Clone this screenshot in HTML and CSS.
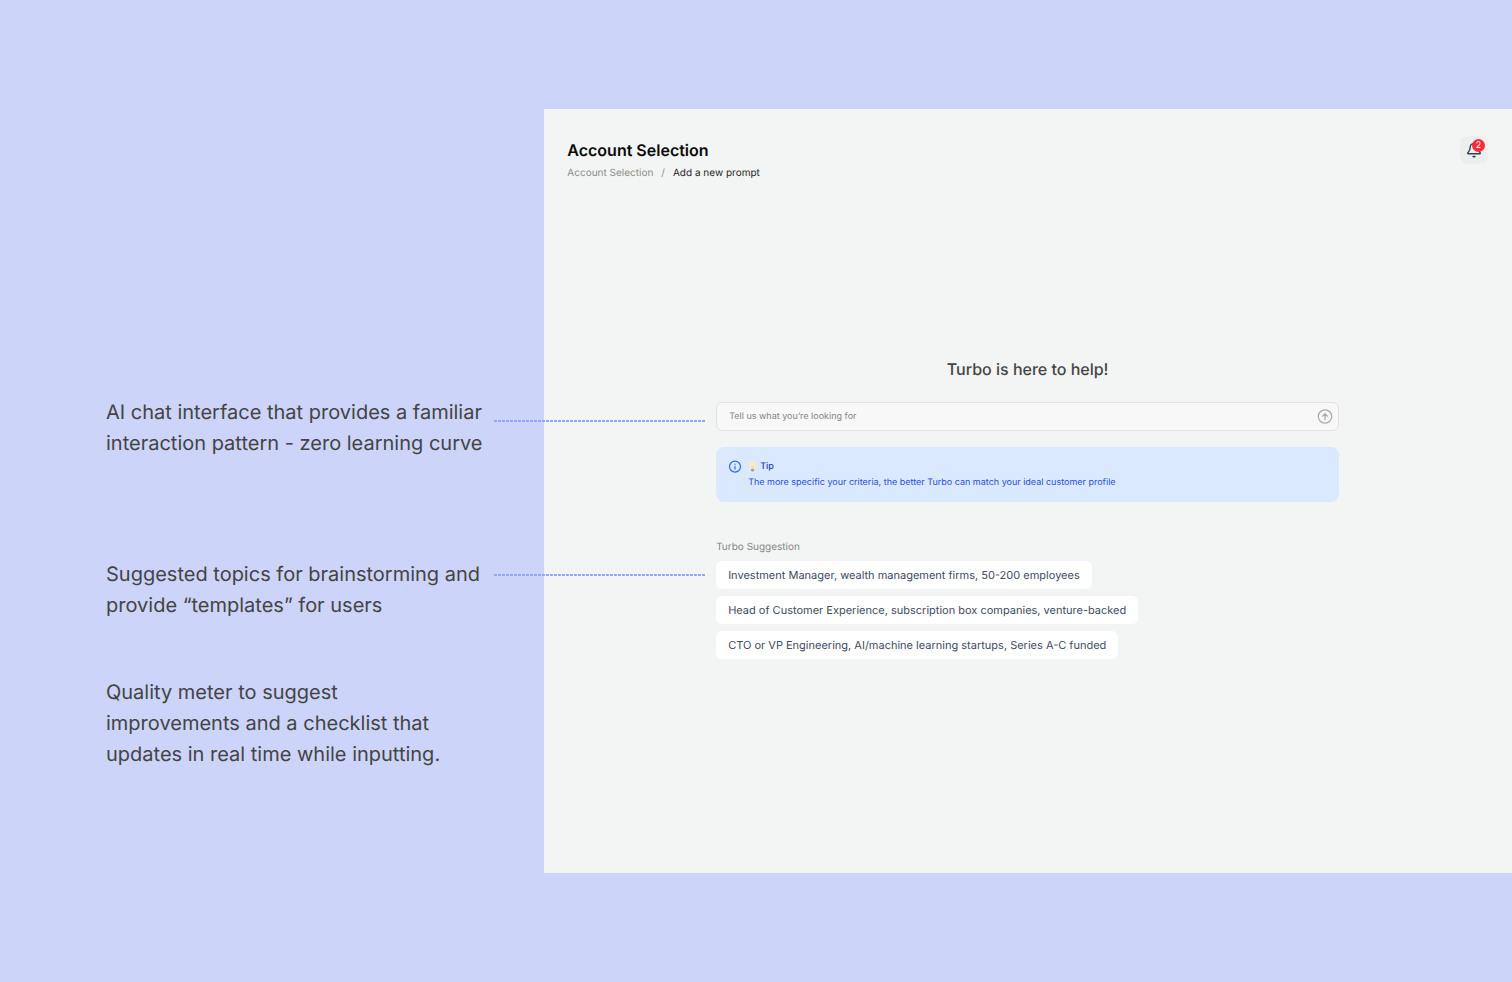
FILE: index.html
```html
<!DOCTYPE html>
<html lang="en">
<head>
    <meta charset="UTF-8">
    <meta name="viewport" content="width=device-width, initial-scale=1.0">
    <title>Account Selection</title>
    <link rel="stylesheet" href="styles.css">
</head>
<body>

<!-- Notes -->
<aside class="notes">
    <p class="note note-chat">AI chat interface that provides a familiar interaction pattern - zero learning curve</p>
    <p class="note note-topics">Suggested topics for brainstorming and provide “templates” for users</p>
    <p class="note note-quality">Quality meter to suggest improvements and a checklist that updates in real time while inputting.</p>
</aside>

<!-- App -->
<main class="panel">
    <header class="panel-header">
        <div>
            <h1>Account Selection</h1>
            <nav class="breadcrumb" aria-label="Breadcrumb">
                <a href="#">Account Selection</a>
                <span class="separator">/</span>
                <span class="current">Add a new prompt</span>
            </nav>
        </div>
        <button class="bell-btn" type="button" aria-label="Notifications">
            <svg width="16" height="16" viewBox="0 0 16 16" fill="none" stroke="#344054" stroke-width="1.4" stroke-linecap="round" stroke-linejoin="round">
                <path d="M8 1.6C5.7 1.6 4.2 3.3 4.2 5.4C4.2 8 3.2 9.2 1.9 10.7C1.5 11.2 1.7 11.8 2.3 11.8H13.7C14.3 11.8 14.5 11.2 14.1 10.7C12.8 9.2 11.8 8 11.8 5.4C11.8 3.3 10.3 1.6 8 1.6Z"/>
                <path d="M7 14.5C7.5 15 8.5 15 9 14.5Z"/>
            </svg>
            <span class="badge">2</span>
        </button>
    </header>

    <section class="chat">
        <h2>Turbo is here to help!</h2>

        <form class="prompt">
            <input type="text" name="prompt" aria-label="Prompt" placeholder="Tell us what you’re looking for">
            <button class="send-btn" type="submit" aria-label="Send">
                <svg width="16" height="16" viewBox="0 0 16 16" fill="none" stroke="#a8a8a8" stroke-width="1.2" stroke-linecap="round" stroke-linejoin="round">
                    <circle cx="8" cy="7.5" r="6.7"/>
                    <path d="M8 10.5V4.8M5.5 7.2L8 4.8L10.5 7.2"/>
                </svg>
            </button>
        </form>

        <div class="tip">
            <svg width="14" height="16" viewBox="0 0 14 16" fill="none" stroke="#2b6bf3" stroke-width="1.2" stroke-linecap="round">
                <circle cx="7" cy="7.6" r="5.5"/>
                <path d="M7 7.4V10.1M7 5.2V5.3"/>
            </svg>
            <div>
                <h3>
                    <svg width="9" height="12" viewBox="0 0 9 12">
                        <path d="M4.5 0.6C2.4 0.6 1.1 2 1.1 3.8C1.1 5.7 2.7 6.3 2.9 8H6.1C6.3 6.3 7.9 5.7 7.9 3.8C7.9 2 6.6 0.6 4.5 0.6Z" fill="#fdebbd"/>
                        <path d="M3.8 8V5L4.5 5.6L5.2 5V8" fill="none" stroke="#f0cd80" stroke-width="0.6"/>
                        <path d="M3.1 8H5.9V9.6L5.2 10.5H3.8L3.1 9.6Z" fill="#a39d92"/>
                    </svg>
                    Tip
                </h3>
                <p>The more specific your criteria, the better Turbo can match your ideal customer profile</p>
            </div>
        </div>

        <div class="suggestions">
            <h3>Turbo Suggestion</h3>
            <button type="button">Investment Manager, wealth management firms, 50-200 employees</button>
            <button type="button">Head of Customer Experience, subscription box companies, venture-backed</button>
            <button type="button">CTO or VP Engineering, AI/machine learning startups, Series A-C funded</button>
        </div>
    </section>
</main>

</body>
</html>
```

FILE: styles.css
```css
* {
    box-sizing: border-box;
}

body {
    font-family: Inter, "Liberation Sans", sans-serif;
    font-size: 11px;
    line-height: 16px;
    text-rendering: geometricPrecision;
    background-color: #ccd4f9;
    margin: 0;
    min-height: 100vh;
    display: grid;
    grid-template-columns: 36fr 64fr;
    overflow-x: hidden;
}

h1, h2, h3, p {
    margin: 0;
}

button, input {
    font: inherit;
    text-rendering: inherit;
}

button {
    border: none;
    padding: 0;
    cursor: pointer;
}

svg {
    display: block;
    flex: none;
}

/* Notes */
.notes {
    padding: 397px 54px 0 106px;
}

.note {
    position: relative;
    font-size: 20px;
    line-height: 31px;
    color: #444444;
    margin-bottom: 56px;
}

.note-chat {
    margin-bottom: 100px;
}

.note-quality {
    max-width: 344px;
}

/* dotted line that runs from the note to the app */
.note-chat::after,
.note-topics::after {
    content: '';
    position: absolute;
    left: 100%;
    top: 23px;
    width: 212px;
    height: 2px;
    margin-left: 4px;
    background: repeating-linear-gradient(90deg, #93a8fb 0 3px, transparent 3px 4px);
}

.note-topics::after {
    top: 15px;
}

/* App */
.panel {
    background-color: #f3f5f4;
    margin: 109px 0;
    padding: 27px 24px 27px 23px;
}

.panel-header {
    display: flex;
    justify-content: space-between;
    align-items: flex-start;
}

h1 {
    font-size: 16px;
    font-weight: 600;
    line-height: 28px;
    color: #0a0a0a;
}

.breadcrumb {
    display: flex;
    gap: 8px;
    margin-top: 1px;
    font-size: 10px;
}

.breadcrumb a {
    color: #8c8c8c;
    text-decoration: none;
}

.separator {
    color: #8c8c8c;
}

.current {
    color: #1f1f1f;
}

.bell-btn {
    position: relative;
    display: grid;
    place-items: center;
    width: 28px;
    height: 28px;
    border-radius: 8px;
    background-color: #eeeeee;
}

.badge {
    position: absolute;
    top: 3px;
    right: 3px;
    width: 13px;
    height: 13px;
    border-radius: 50%;
    background-color: #fb2c36;
    color: #ffffff;
    font-size: 9px;
    line-height: 13px;
    text-align: center;
}

/* Chat */
.chat {
    max-width: 623px;
    margin: 176px auto 0;
}

h2 {
    font-size: 16px;
    font-weight: 500;
    line-height: 24px;
    color: #444444;
    text-align: center;
    margin-bottom: 21px;
}

.prompt {
    display: flex;
    align-items: center;
    height: 29px;
    padding: 0 5px 0 12px;
    border: 1px solid #e2e2e2;
    border-radius: 6px;
    background-color: #f8f8f8;
}

.prompt input {
    flex: 1;
    min-width: 0;
    padding: 0;
    border: none;
    outline: none;
    background: none;
    font-size: 9px;
    color: #444444;
}

.prompt input::placeholder {
    color: #858585;
    opacity: 1;
}

.send-btn {
    background: none;
}

.tip {
    display: flex;
    gap: 6px;
    margin-top: 16px;
    padding: 12px 12px 11px;
    border-radius: 8px;
    background-color: #dbe9fe;
}

.tip h3 {
    display: flex;
    align-items: center;
    gap: 3px;
    font-size: 9px;
    font-weight: 500;
    color: #1e40af;
}

.tip p {
    font-size: 9px;
    color: #2450dc;
}

/* Suggestions */
.suggestions {
    display: flex;
    flex-direction: column;
    align-items: flex-start;
    gap: 7px;
    margin-top: 38px;
}

.suggestions h3 {
    font-size: 10px;
    font-weight: 400;
    line-height: 14px;
    color: #858585;
}

.suggestions button {
    padding: 6px 12px;
    border-radius: 6px;
    background-color: #ffffff;
    color: #414b5e;
    text-align: left;
}
```
